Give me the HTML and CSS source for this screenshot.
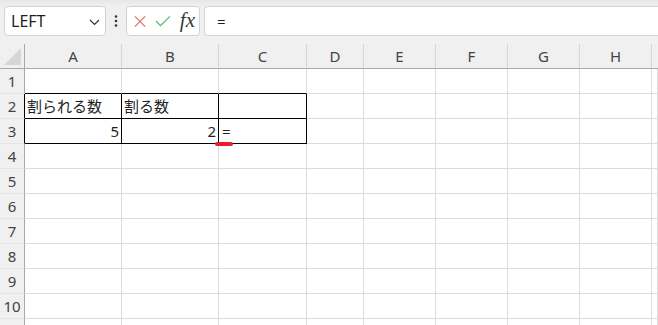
FILE: index.html
```html
<!DOCTYPE html>
<html lang="ja">
<head>
    <meta charset="UTF-8">
    <title>Book1</title>
    <link rel="stylesheet" href="styles.css">
</head>
<body>
    <div class="toolbar">
        <div class="namebox">
            <span>LEFT</span>
            <svg class="chevron" width="11" height="7" viewBox="0 0 11 7"><polyline points="1,1 5.5,5.5 10,1" fill="none" stroke="#333" stroke-width="1.2"/></svg>
        </div>
        <div class="grip">
            <svg width="4" height="12" viewBox="0 0 4 12"><circle cx="2" cy="1.5" r="1.3" fill="#333"/><circle cx="2" cy="6" r="1.3" fill="#333"/><circle cx="2" cy="10.5" r="1.3" fill="#333"/></svg>
        </div>
        <div class="fnbox">
            <svg width="13" height="13" viewBox="0 0 13 13"><path d="M1 1 L12 12 M12 1 L1 12" stroke="#e8706e" stroke-width="1.4" fill="none"/></svg>
            <svg width="17" height="12" viewBox="0 0 17 12"><polyline points="1,6 6,11 16,1" fill="none" stroke="#5fb972" stroke-width="1.4"/></svg>
            <span class="fx">fx</span>
        </div>
        <div class="formula">=</div>
    </div>

    <div class="sheet">
        <div class="corner"><div class="tri"></div></div>
        <div class="colhead">A</div><div class="colhead">B</div><div class="colhead">C</div><div class="colhead">D</div><div class="colhead">E</div><div class="colhead">F</div><div class="colhead">G</div><div class="colhead">H</div><div class="colhead last"></div>

        <div class="rowhead">1</div>
        <div class="c bb"></div><div class="c bb"></div><div class="c bb"></div><div class="c"></div><div class="c"></div><div class="c"></div><div class="c"></div><div class="c"></div><div class="c"></div>

        <div class="rowhead br">2</div>
        <div class="c br bb">割られる数</div><div class="c br bb">割る数</div><div class="c br bb"></div><div class="c"></div><div class="c"></div><div class="c"></div><div class="c"></div><div class="c"></div><div class="c"></div>

        <div class="rowhead br">3</div>
        <div class="c br bb num">5</div><div class="c br bb num">2</div><div class="c br bb edit">=<span class="marker"></span></div><div class="c"></div><div class="c"></div><div class="c"></div><div class="c"></div><div class="c"></div><div class="c"></div>

        <div class="rowhead">4</div>
        <div class="c"></div><div class="c"></div><div class="c"></div><div class="c"></div><div class="c"></div><div class="c"></div><div class="c"></div><div class="c"></div><div class="c"></div>

        <div class="rowhead">5</div>
        <div class="c"></div><div class="c"></div><div class="c"></div><div class="c"></div><div class="c"></div><div class="c"></div><div class="c"></div><div class="c"></div><div class="c"></div>

        <div class="rowhead">6</div>
        <div class="c"></div><div class="c"></div><div class="c"></div><div class="c"></div><div class="c"></div><div class="c"></div><div class="c"></div><div class="c"></div><div class="c"></div>

        <div class="rowhead">7</div>
        <div class="c"></div><div class="c"></div><div class="c"></div><div class="c"></div><div class="c"></div><div class="c"></div><div class="c"></div><div class="c"></div><div class="c"></div>

        <div class="rowhead">8</div>
        <div class="c"></div><div class="c"></div><div class="c"></div><div class="c"></div><div class="c"></div><div class="c"></div><div class="c"></div><div class="c"></div><div class="c"></div>

        <div class="rowhead">9</div>
        <div class="c"></div><div class="c"></div><div class="c"></div><div class="c"></div><div class="c"></div><div class="c"></div><div class="c"></div><div class="c"></div><div class="c"></div>

        <div class="rowhead">10</div>
        <div class="c"></div><div class="c"></div><div class="c"></div><div class="c"></div><div class="c"></div><div class="c"></div><div class="c"></div><div class="c"></div><div class="c"></div>

        <div class="rowhead"></div>
        <div class="c"></div><div class="c"></div><div class="c"></div><div class="c"></div><div class="c"></div><div class="c"></div><div class="c"></div><div class="c"></div><div class="c"></div>
    </div>
</body>
</html>
```

FILE: styles.css
```css
* {
    box-sizing: border-box;
}

body {
    margin: 0;
    font-family: "Noto Sans", "Noto Sans CJK JP", sans-serif;
    font-size: 15px;
    color: #1f1f1f;
    background-color: #fff;
    overflow: hidden;
}

/* formula bar */
.toolbar {
    display: flex;
    align-items: center;
    height: 44px;
    padding: 6px 0 8px 4px;
    background: linear-gradient(#e7e7e7 0, #efefef 6px, #f1f1f1 100%);
}

.namebox,
.fnbox,
.formula {
    height: 30px;
    background-color: #fff;
    border: 1px solid #d2d2d2;
    border-radius: 4px;
    display: flex;
    align-items: center;
}

.namebox {
    width: 102px;
    padding: 0 5px 0 6px;
    justify-content: space-between;
    font-size: 16px;
}

.chevron {
    margin-top: 2px;
}

.grip {
    width: 20px;
    display: flex;
    justify-content: center;
}

.fnbox {
    width: 74px;
    padding: 0 4px 0 7px;
    gap: 9px;
}

.fx {
    font-family: "Liberation Serif", serif;
    font-style: italic;
    font-size: 21px;
    line-height: 1;
    color: #3a3a3a;
    margin-left: 0;
    padding-bottom: 2px;
}

.formula {
    flex: 1;
    margin-left: 4px;
    padding-left: 12px;
    border-right: none;
    border-radius: 4px 0 0 4px;
}

/* grid */
.sheet {
    display: grid;
    grid-template-columns: 25px 97px 97px 88px 57px 72px 72px 72px 72px 1fr;
    grid-auto-rows: 25px;
}

.corner {
    background-color: #f0f0f0;
    border-bottom: 1px solid #a9a9a9;
    border-right: 1px solid #a9a9a9;
    position: relative;
}

.tri {
    position: absolute;
    left: 4px;
    top: 4px;
    width: 17px;
    height: 17px;
    background-color: #d6d6d6;
    clip-path: polygon(100% 0, 100% 100%, 0 100%);
}

.colhead {
    background-color: #f0f0f0;
    border-bottom: 1px solid #a9a9a9;
    border-right: 1px solid #d6d6d6;
    color: #444;
    text-align: center;
    line-height: 24px;
}

.colhead.last {
    border-right: none;
}

.rowhead {
    background-color: #f0f0f0;
    border-right: 1px solid #a9a9a9;
    border-bottom: 1px solid #e4e4e4;
    color: #444;
    text-align: center;
    line-height: 24px;
}

.c {
    border-right: 1px solid #dcdcdc;
    border-bottom: 1px solid #dcdcdc;
    padding: 0 2px;
    line-height: 24px;
    white-space: nowrap;
}

.c.num {
    text-align: right;
    padding-right: 2px;
}

.c.edit {
    position: relative;
    padding-left: 3px;
}

.rowhead.br,
.c.br {
    border-right-color: #000;
}

.c.bb {
    border-bottom-color: #000;
}

.marker {
    position: absolute;
    left: -4px;
    bottom: -3px;
    width: 18px;
    height: 4px;
    border-radius: 2px;
    background-color: #e2202a;
}
```
